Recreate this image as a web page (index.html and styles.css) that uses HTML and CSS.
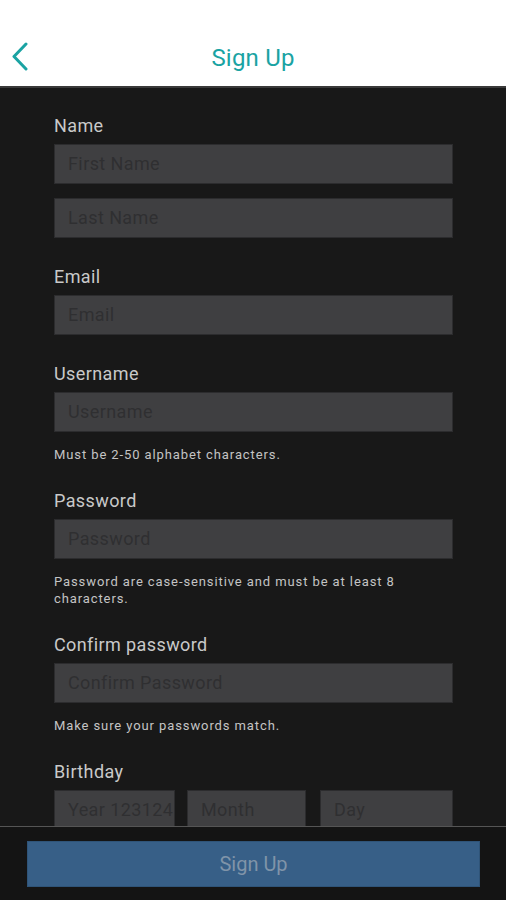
FILE: index.html
```html
<!DOCTYPE html>
<html>
<head>
<meta charset="utf-8">
<link rel="stylesheet" href="styles.css">
</head>
<body>
<div class="app">
  <header class="topbar">
    <svg class="back" width="20" height="30" viewBox="0 0 20 30"><path d="M16 2 L4 14.5 L16 27" fill="none" stroke="#1aa3a3" stroke-width="3" stroke-linecap="round" stroke-linejoin="round"/></svg>
    <h1 class="title">Sign Up</h1>
  </header>
  <main class="form">
    <section class="group">
      <div class="label">Name</div>
      <div class="input">First Name</div>
      <div class="input">Last Name</div>
    </section>
    <section class="group">
      <div class="label">Email</div>
      <div class="input">Email</div>
    </section>
    <section class="group">
      <div class="label">Username</div>
      <div class="input">Username</div>
      <div class="help">Must be 2-50 alphabet characters.</div>
    </section>
    <section class="group">
      <div class="label">Password</div>
      <div class="input">Password</div>
      <div class="help">Password are case-sensitive and must be at least 8 characters.</div>
    </section>
    <section class="group">
      <div class="label">Confirm password</div>
      <div class="input">Confirm Password</div>
      <div class="help">Make sure your passwords match.</div>
    </section>
    <section class="group">
      <div class="label">Birthday</div>
      <div class="row">
        <div class="input year">Year 123124</div>
        <div class="input month">Month</div>
        <div class="input day">Day</div>
      </div>
    </section>
  </main>
  <footer class="footer">
    <div class="btn">Sign Up</div>
  </footer>
</div>
</body>
</html>
```
FILE: styles.css
```css
* { box-sizing: border-box; }
html, body { margin: 0; padding: 0; }
body { font-family: Roboto, "Noto Sans", "Liberation Sans", sans-serif; background: #181818; }
.app { height: 900px; display: flex; flex-direction: column; overflow: hidden; }
.topbar { height: 88px; flex: none; background: #fff; border-bottom: 2px solid #3a3a3a; display: flex; align-items: center; justify-content: center; padding-top: 29px; position: relative; }
.back { position: absolute; left: 10px; top: 42px; }
.title { margin: 0; font-size: 24px; font-weight: 400; color: #1aa3a3; letter-spacing: 0.2px; }
.form { flex: 1; overflow: hidden; background: #181818; padding: 27px 53px 0 54px; }
.group { margin-bottom: 28px; }
.label { font-size: 18px; line-height: 22px; color: #c9c9c9; margin-bottom: 7px; letter-spacing: 0.4px; }
.input { height: 40px; background: #3f3f41; border: 1px solid #2c2c2e; color: #2f2f31; font-size: 18px; line-height: 38px; padding-left: 13px; white-space: nowrap; overflow: hidden; letter-spacing: 0.4px; }
.input + .input { margin-top: 14px; }
.help { font-size: 13px; line-height: 17px; color: #c4c4c4; margin-top: 14px; margin-bottom: -1px; letter-spacing: 0.9px; }
.row { display: flex; }
.row .input + .input { margin-top: 0; }
.year { width: 121px; }
.month { width: 119px; margin-left: 12px; }
.day { width: 133px; margin-left: 14px; }
.footer { height: 74px; flex: none; background: #141414; border-top: 1px solid #555; padding: 14px 26px 0 27px; }
.btn { height: 46px; background: #375f87; border: 1px solid #2f5478; color: #8094a9; font-size: 20px; display: flex; align-items: center; justify-content: center; }
```
